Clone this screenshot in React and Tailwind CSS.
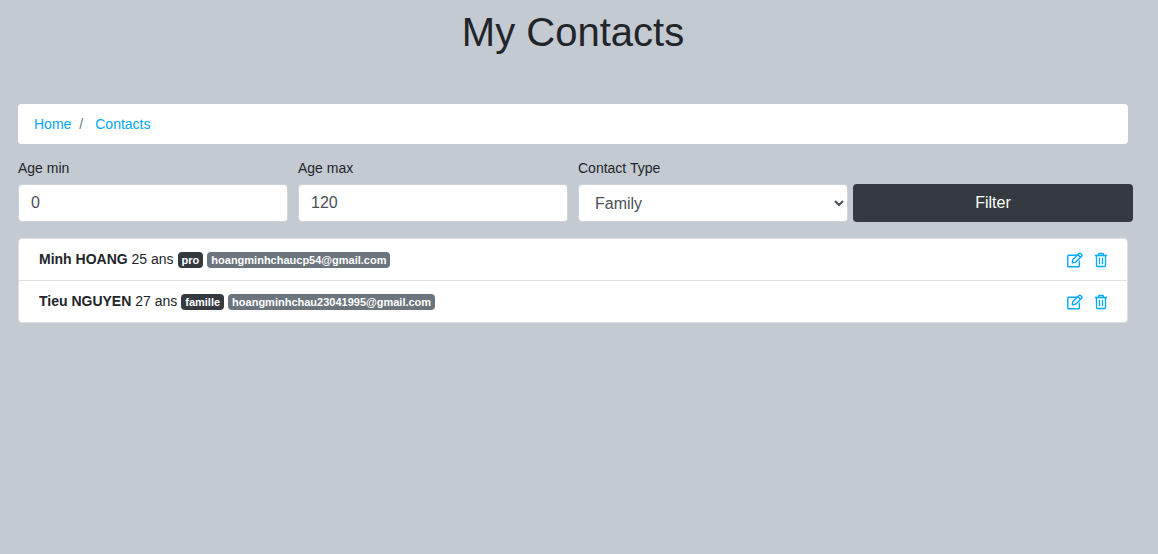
const contacts = [
  { name: "Minh HOANG", age: 25, type: "pro", email: "hoangminhchaucp54@gmail.com" },
  { name: "Tieu NGUYEN", age: 27, type: "famille", email: "hoangminhchau23041995@gmail.com" },
];

const controlClass =
  "block h-[38px] w-full rounded border border-[#ced4da] bg-white text-base text-[#495057]";

function EditIcon() {
  return (
    <svg width="16" height="16" viewBox="0 0 16 16" fill="none" stroke="currentColor" strokeWidth="1.4" strokeLinejoin="round" aria-hidden="true">
      <path d="M9.8 3.2H1.6a.8.8 0 0 0-.8.8v9.9a.8.8 0 0 0 .8.8h10a.8.8 0 0 0 .8-.8V8.6" />
      <path d="M5.3 10.7l.4-2.9L12 1.6a1.1 1.1 0 0 1 1.6 0l1 1a1.1 1.1 0 0 1 0 1.6l-6.3 6.2z" />
      <path d="M10.9 2.8l2.5 2.5" />
    </svg>
  );
}

function TrashIcon() {
  return (
    <svg width="12" height="16" viewBox="0 0 12 16" fill="none" stroke="currentColor" strokeWidth="1.3" aria-hidden="true">
      <path d="M0 3.5h12" strokeWidth="1.6" />
      <path d="M3.6 3.4V2.3a.8.8 0 0 1 .8-.8h3.2a.8.8 0 0 1 .8.8v1.1" />
      <path d="M1.5 3.6v9.9a1 1 0 0 0 1 1h7a1 1 0 0 0 1-1V3.6" />
      <path d="M4.5 5.8v6.4M7.5 5.8v6.4" />
    </svg>
  );
}

function Field({ id, label, children }) {
  return (
    <div className="px-[5px]">
      <label htmlFor={id} className="mb-2 block leading-4">{label}</label>
      {children}
    </div>
  );
}

function Badge({ className, children }) {
  return (
    <span className={`rounded px-1 text-[11px] leading-4 font-bold text-white ${className}`}>
      {children}
    </span>
  );
}

export default function App() {
  return (
    <div className="min-h-screen bg-[#c4cad2] pt-2 pr-[30px] pb-8 pl-[18px] font-['Liberation_Sans',Arial,sans-serif] text-sm text-[#212529]">
      <h1 className="mb-12 text-center text-[40px] leading-[48px]">My Contacts</h1>

      <nav aria-label="Breadcrumb" className="mb-4 rounded bg-white px-4 py-[10px]">
        <ol className="flex leading-5">
          <li><a href="#home" className="text-[#00a8ff]">Home</a></li>
          <li className="pl-2">
            <span className="pr-3 text-[#6c757d]">/</span>
            <a href="#contacts" className="text-[#00a8ff]">Contacts</a>
          </li>
        </ol>
      </nav>

      <form className="-mx-[5px] mb-4 grid grid-cols-4 items-end" onSubmit={(e) => e.preventDefault()}>
        <Field id="age-min" label="Age min">
          <input id="age-min" type="text" inputMode="numeric" defaultValue="0" className={`${controlClass} px-3`} />
        </Field>
        <Field id="age-max" label="Age max">
          <input id="age-max" type="text" inputMode="numeric" defaultValue="120" className={`${controlClass} px-3`} />
        </Field>
        <Field id="contact-type" label="Contact Type">
          <select id="contact-type" className={`${controlClass} pl-3`}>
            <option>Family</option>
            <option>Professional</option>
          </select>
        </Field>
        <button type="submit" className="h-[38px] rounded bg-[#343a40] text-base text-white">Filter</button>
      </form>

      <ul className="divide-y divide-[#dfdfdf] rounded border border-[#dfdfdf] bg-white">
        {contacts.map((c) => (
          <li key={c.email} className="flex items-center justify-between px-5 py-[10px]">
            <div className="flex items-baseline gap-1 leading-[21px]">
              <span><strong>{c.name}</strong> {c.age} ans</span>
              <Badge className="bg-[#343a40]">{c.type}</Badge>
              <Badge className="bg-[#6c757d]">{c.email}</Badge>
            </div>
            <div className="flex items-center gap-3 text-[#00a8ff]">
              <button type="button" aria-label={`Edit ${c.name}`}><EditIcon /></button>
              <button type="button" aria-label={`Delete ${c.name}`}><TrashIcon /></button>
            </div>
          </li>
        ))}
      </ul>
    </div>
  );
}
